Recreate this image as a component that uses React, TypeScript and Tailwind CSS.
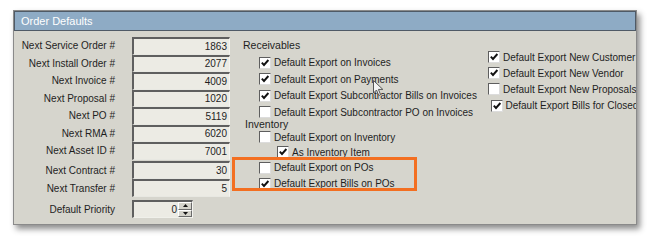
import React from "react";

function Check({ checked }: { checked: boolean }) {
  return (
    <span className="inline-block w-[12px] h-[12px] shrink-0 bg-white border-t border-l border-[#5e5e5e] border-r-[#dcdcdc] border-b-[#dcdcdc] border-r border-b relative">
      {checked && (
        <svg width="10" height="10" viewBox="0 0 10 10" className="absolute left-0 top-0">
          <path d="M1.8 4.6 L4 7 L8.4 2" fill="none" stroke="#111" strokeWidth="1.9" />
        </svg>
      )}
    </span>
  );
}

function CheckRow({ checked, label, h, indent }: { checked: boolean; label: string; h: string; indent: string }) {
  return (
    <div className={`flex items-center whitespace-nowrap ${h} ${indent}`}>
      <Check checked={checked} />
      <span className="ml-[3px]">{label}</span>
    </div>
  );
}

function Field({ label, value, h, mt }: { label: string; value: string; h: string; mt?: string }) {
  return (
    <div className={`flex items-stretch ${h} ${mt ?? ""}`}>
      <div className="w-[101px] flex items-center justify-end whitespace-nowrap">{label}</div>
      <div className="ml-[17px] w-[98px] bg-[#ecebe4] border-t-2 border-l-2 border-[#5f5f5f] border-r border-b border-r-[#f4f4f0] border-b-[#e8e8e2] flex items-center justify-end pr-[2px]">
        {value}
      </div>
    </div>
  );
}

export default function App() {
  return (
    <div className="w-[658px] h-[240px] bg-white overflow-hidden pt-[10px] pl-[13px] font-['Liberation_Sans',Arial,sans-serif] text-[10px] text-[#1e1e1e]">
      <div className="relative w-[624px] h-[215px] bg-[#d6d5cd] border border-[#8a8a8a] shadow-[3px_4px_6px_rgba(0,0,0,0.45)] overflow-hidden">
        <div className="h-[20px] bg-[#8eabc5] border border-[#4f5a66] text-white text-[11px] pl-[6px] flex items-center">
          Order Defaults
        </div>
        <div className="flex pt-[6px]">
          {/* left column */}
          <div className="flex flex-col">
            <Field label="Next Service Order #" value="1863" h="h-[17.5px]" />
            <Field label="Next Install Order #" value="2077" h="h-[17.5px]" />
            <Field label="Next Invoice #" value="4009" h="h-[17.5px]" />
            <Field label="Next Proposal #" value="1020" h="h-[17.5px]" />
            <Field label="Next PO #" value="5119" h="h-[17.5px]" />
            <Field label="Next RMA #" value="6020" h="h-[17.5px]" />
            <Field label="Next Asset ID #" value="7001" h="h-[17.5px]" />
            <Field label="Next Contract #" value="30" h="h-[18px]" mt="mt-[1.5px]" />
            <Field label="Next Transfer #" value="5" h="h-[18px]" />
            <div className="flex items-stretch h-[18px] mt-[3px]">
              <div className="w-[101px] flex items-center justify-end whitespace-nowrap">Default Priority</div>
              <div className="ml-[17px] w-[61px] bg-[#ecebe4] border-t-2 border-l-2 border-[#5f5f5f] border-r border-b border-r-[#f4f4f0] border-b-[#f0f0ea] flex items-center justify-end">
                <span className="pr-[1px]">0</span>
                <div className="flex flex-col w-[14px] h-full">
                  <div className="flex-1 bg-[#d4d3cb] border border-t-white border-l-white border-r-[#6a6a6a] border-b-[#6a6a6a] flex items-center justify-center">
                    <svg width="5" height="3" viewBox="0 0 5 3"><path d="M0 3 L2.5 0 L5 3Z" fill="#111" /></svg>
                  </div>
                  <div className="flex-1 bg-[#d4d3cb] border border-t-white border-l-white border-r-[#6a6a6a] border-b-[#6a6a6a] flex items-center justify-center">
                    <svg width="5" height="3" viewBox="0 0 5 3"><path d="M0 0 L2.5 3 L5 0Z" fill="#111" /></svg>
                  </div>
                </div>
              </div>
            </div>
          </div>
          {/* middle column */}
          <div className="ml-[13px] w-[245px] shrink-0 flex flex-col">
            <div className="h-[17.5px] flex items-center text-[10.5px]">Receivables</div>
            <CheckRow checked label="Default Export on Invoices" h="h-[16.5px]" indent="ml-[16px]" />
            <CheckRow checked label="Default Export on Payments" h="h-[16.5px]" indent="ml-[16px]" />
            <CheckRow checked label="Default Export Subcontractor Bills on Invoices" h="h-[16.5px]" indent="ml-[16px]" />
            <CheckRow checked={false} label="Default Export Subcontractor PO on Invoices" h="h-[16px]" indent="ml-[16px]" />
            <div className="h-[10px] flex items-center ml-[2px] text-[10.5px]">Inventory</div>
            <CheckRow checked={false} label="Default Export on Inventory" h="h-[14px]" indent="ml-[16px]" />
            <CheckRow checked label="As Inventory Item" h="h-[16px]" indent="ml-[34px]" />
            <CheckRow checked={false} label="Default Export on POs" h="h-[15.5px]" indent="ml-[16px]" />
            <CheckRow checked label="Default Export Bills on POs" h="h-[16px]" indent="ml-[16px]" />
          </div>
          {/* right column */}
          <div className="flex flex-col pt-[12px] shrink-0">
            <CheckRow checked label="Default Export New Customer" h="h-[16px]" indent="ml-0" />
            <CheckRow checked label="Default Export New Vendor" h="h-[16px]" indent="ml-0" />
            <CheckRow checked={false} label="Default Export New Proposals" h="h-[16px]" indent="ml-0" />
            <CheckRow checked label="Default Export Bills for Closed" h="h-[17px]" indent="ml-[2.5px]" />
          </div>
        </div>
        {/* orange highlight */}
        <div className="absolute left-[218px] top-[146px] w-[185px] h-[34px] border-[3px] border-[#f36f21]" />
        {/* mouse cursor */}
        <svg className="absolute left-[359px] top-[69px]" width="11" height="17" viewBox="0 0 11 17">
          <path d="M0.5 0.5 L0.5 13 L3.5 10 L5.8 15.5 L7.6 14.7 L5.4 9.4 L9.8 9.4 Z" fill="#f4f4f4" stroke="#555" strokeWidth="1" />
        </svg>
      </div>
    </div>
  );
}
